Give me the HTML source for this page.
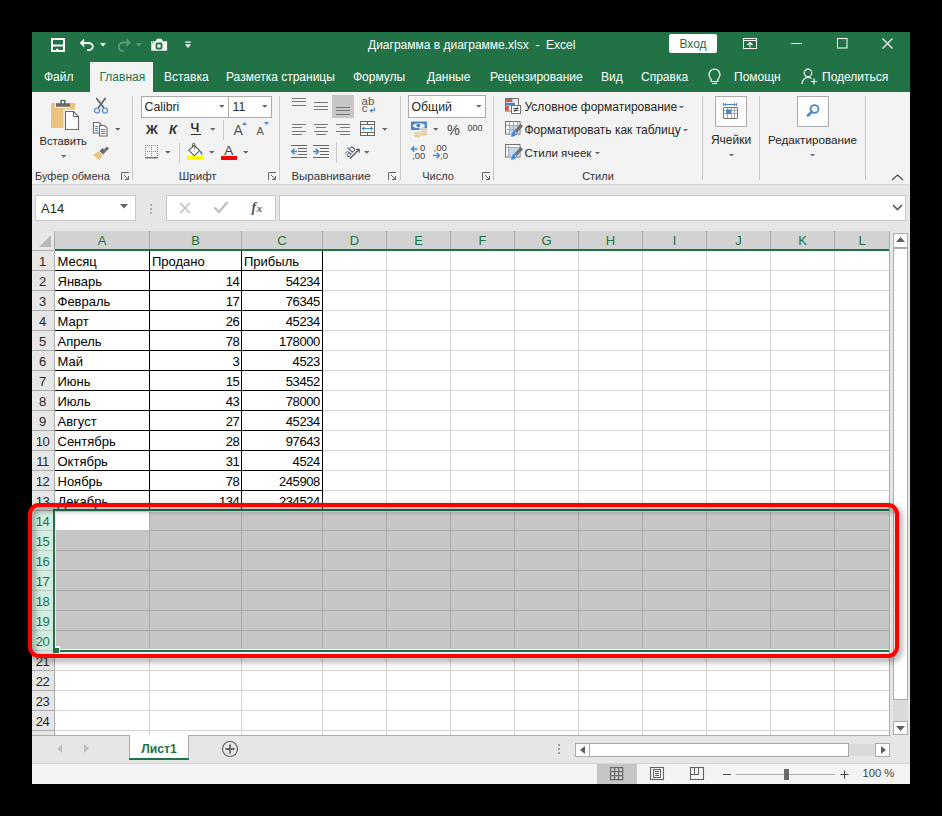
<!DOCTYPE html>
<html><head><meta charset="utf-8"><style>
html,body{margin:0;padding:0;background:#000;width:942px;height:816px;overflow:hidden;position:relative}
.t{position:absolute;font-family:"Liberation Sans",sans-serif;white-space:pre}
.r{position:absolute;display:block}
</style></head><body>
<div class="r" style="left:32px;top:32px;width:878px;height:752px;background:#F3F3F3;"></div>
<div class="r" style="left:32px;top:32px;width:878px;height:60px;background:#217346;"></div>
<div class="r" style="left:90px;top:62px;width:63px;height:30px;background:#F3F3F3;"></div>
<svg class="r" style="left:50px;top:37px;" width="16" height="16" viewBox="0 0 16 16"><rect x="2" y="2" width="12" height="12" fill="none" stroke="#fff" stroke-width="2"/><rect x="2" y="7.5" width="12" height="2" fill="#fff"/><rect x="6" y="11.8" width="2.4" height="2.4" fill="#fff"/></svg>
<svg class="r" style="left:79px;top:37px;" width="18" height="16" viewBox="0 0 18 16"><path d="M0.8 6 5.2 1.6v8.8z" fill="#fff"/><path d="M4 6h5.2a4.6 3.6 0 0 1 0 7.2H8" fill="none" stroke="#fff" stroke-width="1.8"/></svg>
<svg class="r" style="left:99.5px;top:42.5px;" width="7" height="4" viewBox="0 0 7 4"><path d="M0 0h6l-3 3.5z" fill="#fff"/></svg>
<svg class="r" style="left:115px;top:37px;" width="18" height="16" viewBox="0 0 18 16"><path d="M16 5.5 11.5 1.2v8.6z" fill="#5E9A77"/><path d="M13 5.5H8a4.3 4.3 0 0 0 0 8.6h1" fill="none" stroke="#5E9A77" stroke-width="1.8"/></svg>
<svg class="r" style="left:135.5px;top:42.5px;" width="7" height="4" viewBox="0 0 7 4"><path d="M0 0h6l-3 3.5z" fill="#5E9A77"/></svg>
<svg class="r" style="left:150px;top:38px;" width="18" height="14" viewBox="0 0 18 14"><path d="M1.2 3.2h4.3l1.6-2.4h4.4l1.6 2.4h4v9.6H1.2z" fill="#F2F2F2"/><rect x="5.6" y="4.6" width="6.8" height="6.8" rx="1.6" fill="#217346"/><rect x="7.4" y="6.4" width="3.2" height="3.2" fill="#F2F2F2"/><circle cx="2.6" cy="4.6" r="0.6" fill="#217346"/></svg>
<svg class="r" style="left:184px;top:40px;" width="8" height="10" viewBox="0 0 8 10"><rect x="1.2" y="1.5" width="5.6" height="1.2" fill="#fff"/><path d="M1 4.2h6l-3 3.8z" fill="#fff"/></svg>
<div class="t" style="left:368px;top:39.30px;font-size:12px;line-height:12px;color:#FFFFFF;font-weight:normal;">Диаграмма в диаграмме.xlsx  -  Excel</div>
<div class="r" style="left:669px;top:34px;width:48px;height:19px;background:#FFFFFF;border-radius:2px;"></div>
<div class="t" style="left:493px;width:400px;text-align:center;top:38.30px;font-size:12px;line-height:12px;color:#217346;font-weight:normal;">Вход</div>
<svg class="r" style="left:742px;top:37px;" width="16" height="13" viewBox="0 0 16 13"><rect x="1.5" y="1.5" width="13" height="10" fill="none" stroke="#fff" stroke-width="1"/><path d="M1.5 3.5h13" stroke="#fff" stroke-width="1"/><path d="M8 10.5v-5M5.5 8 8 5.5 10.5 8" fill="none" stroke="#fff" stroke-width="1.1"/></svg>
<div class="r" style="left:791px;top:43px;width:11px;height:1px;background:#FFFFFF;"></div>
<svg class="r" style="left:836px;top:37px;" width="12" height="12" viewBox="0 0 12 12"><rect x="1.5" y="1.5" width="9.5" height="9.5" fill="none" stroke="#fff" stroke-width="1"/></svg>
<svg class="r" style="left:881px;top:37px;" width="13" height="13" viewBox="0 0 13 13"><path d="M1.5 1.5l10 10M11.5 1.5 1.5 11.5" stroke="#fff" stroke-width="1.1"/></svg>
<div class="t" style="left:44px;top:70.80px;font-size:12px;line-height:12px;color:#FFFFFF;font-weight:normal;">Файл</div>
<div class="t" style="left:164px;top:70.80px;font-size:12px;line-height:12px;color:#FFFFFF;font-weight:normal;">Вставка</div>
<div class="t" style="left:226px;top:70.80px;font-size:12px;line-height:12px;color:#FFFFFF;font-weight:normal;">Разметка страницы</div>
<div class="t" style="left:353px;top:70.80px;font-size:12px;line-height:12px;color:#FFFFFF;font-weight:normal;">Формулы</div>
<div class="t" style="left:427px;top:70.80px;font-size:12px;line-height:12px;color:#FFFFFF;font-weight:normal;">Данные</div>
<div class="t" style="left:490px;top:70.80px;font-size:12px;line-height:12px;color:#FFFFFF;font-weight:normal;">Рецензирование</div>
<div class="t" style="left:601px;top:70.80px;font-size:12px;line-height:12px;color:#FFFFFF;font-weight:normal;">Вид</div>
<div class="t" style="left:641px;top:70.80px;font-size:12px;line-height:12px;color:#FFFFFF;font-weight:normal;">Справка</div>
<div class="t" style="left:734px;top:70.80px;font-size:12px;line-height:12px;color:#FFFFFF;font-weight:normal;">Помощн</div>
<div class="t" style="left:822px;top:70.80px;font-size:12px;line-height:12px;color:#FFFFFF;font-weight:normal;">Поделиться</div>
<div class="t" style="left:99.5px;top:70.80px;font-size:12px;line-height:12px;color:#217346;font-weight:normal;">Главная</div>
<svg class="r" style="left:707px;top:68px;" width="15" height="17" viewBox="0 0 15 17"><path d="M4.2 11.5C3 10.2 2 8.8 2 6.6a5.5 5.5 0 0 1 11 0c0 2.2-1 3.6-2.2 4.9v2H4.2z" fill="none" stroke="#fff" stroke-width="1.2"/><path d="M5 15.5h5" stroke="#fff" stroke-width="1.2"/></svg>
<svg class="r" style="left:801px;top:68px;" width="17" height="17" viewBox="0 0 17 17"><circle cx="7" cy="5" r="3.8" fill="none" stroke="#fff" stroke-width="1.2"/><path d="M1 16c0-3.8 2.6-6.5 6-6.5 1.5 0 2.6.4 3.5 1" fill="none" stroke="#fff" stroke-width="1.2"/><path d="M13 10.5v6M10 13.5h6" stroke="#fff" stroke-width="1.2"/></svg>
<div class="r" style="left:32px;top:184px;width:878px;height:1px;background:#D5D5D5;"></div>
<div class="r" style="left:132px;top:96px;width:1px;height:84px;background:#C8C8C8;"></div>
<div class="r" style="left:279px;top:96px;width:1px;height:84px;background:#C8C8C8;"></div>
<div class="r" style="left:400px;top:96px;width:1px;height:84px;background:#C8C8C8;"></div>
<div class="r" style="left:493px;top:96px;width:1px;height:84px;background:#C8C8C8;"></div>
<div class="r" style="left:702px;top:96px;width:1px;height:84px;background:#C8C8C8;"></div>
<div class="r" style="left:759px;top:96px;width:1px;height:84px;background:#C8C8C8;"></div>
<div class="r" style="left:865px;top:96px;width:1px;height:84px;background:#C8C8C8;"></div>
<div class="t" style="left:35px;top:171.15px;font-size:11px;line-height:11px;color:#333333;font-weight:normal;">Буфер обмена</div>
<div class="t" style="left:-2.3000000000000114px;width:400px;text-align:center;top:170.72px;font-size:11.5px;line-height:11.5px;color:#333333;font-weight:normal;">Шрифт</div>
<div class="t" style="left:131px;width:400px;text-align:center;top:170.72px;font-size:11.5px;line-height:11.5px;color:#333333;font-weight:normal;">Выравнивание</div>
<div class="t" style="left:238px;width:400px;text-align:center;top:171.15px;font-size:11px;line-height:11px;color:#333333;font-weight:normal;">Число</div>
<div class="t" style="left:398px;width:400px;text-align:center;top:171.15px;font-size:11px;line-height:11px;color:#333333;font-weight:normal;">Стили</div>
<svg class="r" style="left:121px;top:172px;" width="9" height="9" viewBox="0 0 9 9"><path d="M0.5 8V0.5H8" fill="none" stroke="#666" stroke-width="1"/><path d="M3 3l4.5 4.5M7.5 4v3.5H4" fill="none" stroke="#666" stroke-width="1"/></svg>
<svg class="r" style="left:268px;top:172px;" width="9" height="9" viewBox="0 0 9 9"><path d="M0.5 8V0.5H8" fill="none" stroke="#666" stroke-width="1"/><path d="M3 3l4.5 4.5M7.5 4v3.5H4" fill="none" stroke="#666" stroke-width="1"/></svg>
<svg class="r" style="left:388px;top:172px;" width="9" height="9" viewBox="0 0 9 9"><path d="M0.5 8V0.5H8" fill="none" stroke="#666" stroke-width="1"/><path d="M3 3l4.5 4.5M7.5 4v3.5H4" fill="none" stroke="#666" stroke-width="1"/></svg>
<svg class="r" style="left:482px;top:172px;" width="9" height="9" viewBox="0 0 9 9"><path d="M0.5 8V0.5H8" fill="none" stroke="#666" stroke-width="1"/><path d="M3 3l4.5 4.5M7.5 4v3.5H4" fill="none" stroke="#666" stroke-width="1"/></svg>
<svg class="r" style="left:891px;top:174px;" width="13" height="7" viewBox="0 0 13 7"><path d="M1 6 6.5 1 12 6" fill="none" stroke="#444" stroke-width="1.1"/></svg>
<div class="r" style="left:32px;top:185px;width:878px;height:46px;background:#E6E6E6;"></div>
<div class="r" style="left:35px;top:195px;width:101px;height:26px;background:#FFFFFF;box-sizing:border-box;border:1px solid #C6C6C6;"></div>
<div class="t" style="left:41px;top:201.75px;font-size:13px;line-height:13px;color:#262626;font-weight:normal;">A14</div>
<svg class="r" style="left:120px;top:204px;" width="9" height="5" viewBox="0 0 9 5"><path d="M0 0h8l-4 4.5z" fill="#666"/></svg>
<div class="r" style="left:150px;top:204px;width:2px;height:2px;background:#B0B0B0;"></div>
<div class="r" style="left:150px;top:208px;width:2px;height:2px;background:#B0B0B0;"></div>
<div class="r" style="left:150px;top:212px;width:2px;height:2px;background:#B0B0B0;"></div>
<div class="r" style="left:166px;top:195px;width:110px;height:26px;background:#FFFFFF;box-sizing:border-box;border:1px solid #C6C6C6;"></div>
<svg class="r" style="left:178px;top:201px;" width="14" height="14" viewBox="0 0 14 14"><path d="M2 2l10 10M12 2 2 12" stroke="#C0C0C0" stroke-width="1.6"/></svg>
<svg class="r" style="left:213px;top:200px;" width="16" height="14" viewBox="0 0 16 14"><path d="M1.5 7.5 6 12 14.5 2" fill="none" stroke="#C0C0C0" stroke-width="2.3"/></svg>
<div class="t" style="left:251.5px;top:200.60px;font-size:14px;line-height:14px;color:#555;font-weight:normal;font-family:'Liberation Serif';font-style:italic;font-weight:bold;">f</div>
<div class="t" style="left:256.8px;top:203.57px;font-size:10.5px;line-height:10.5px;color:#555;font-weight:normal;font-family:'Liberation Serif';font-style:italic;font-weight:bold;">x</div>
<div class="r" style="left:279px;top:195px;width:627px;height:26px;background:#FFFFFF;box-sizing:border-box;border:1px solid #C6C6C6;"></div>
<svg class="r" style="left:892px;top:204px;" width="11" height="7" viewBox="0 0 11 7"><path d="M1 1 5.5 5.5 10 1" fill="none" stroke="#555" stroke-width="1.6"/></svg>
<div class="r" style="left:32px;top:231px;width:857px;height:19px;background:#E6E6E6;"></div>
<div class="r" style="left:55px;top:231px;width:834px;height:18px;background:#D2D2D2;"></div>
<div class="r" style="left:55px;top:249px;width:834px;height:2px;background:#217346;"></div>
<svg class="r" style="left:39px;top:235px;" width="12" height="12" viewBox="0 0 12 12"><path d="M12 0v12H0z" fill="#B9B9B9"/></svg>
<div class="r" style="left:32px;top:250px;width:22px;height:1px;background:#ABABAB;"></div>
<div class="r" style="left:149px;top:231px;width:1px;height:18px;background:#ABABAB;"></div>
<div class="r" style="left:241px;top:231px;width:1px;height:18px;background:#ABABAB;"></div>
<div class="r" style="left:322px;top:231px;width:1px;height:18px;background:#ABABAB;"></div>
<div class="r" style="left:386px;top:231px;width:1px;height:18px;background:#ABABAB;"></div>
<div class="r" style="left:450px;top:231px;width:1px;height:18px;background:#ABABAB;"></div>
<div class="r" style="left:514px;top:231px;width:1px;height:18px;background:#ABABAB;"></div>
<div class="r" style="left:578px;top:231px;width:1px;height:18px;background:#ABABAB;"></div>
<div class="r" style="left:642px;top:231px;width:1px;height:18px;background:#ABABAB;"></div>
<div class="r" style="left:706px;top:231px;width:1px;height:18px;background:#ABABAB;"></div>
<div class="r" style="left:770px;top:231px;width:1px;height:18px;background:#ABABAB;"></div>
<div class="r" style="left:834px;top:231px;width:1px;height:18px;background:#ABABAB;"></div>
<div class="r" style="left:54px;top:231px;width:1px;height:19px;background:#ABABAB;"></div>
<div class="t" style="left:-98.0px;width:400px;text-align:center;top:233.95px;font-size:13px;line-height:13px;color:#217346;font-weight:normal;">A</div>
<div class="t" style="left:-4.5px;width:400px;text-align:center;top:233.95px;font-size:13px;line-height:13px;color:#217346;font-weight:normal;">B</div>
<div class="t" style="left:82.0px;width:400px;text-align:center;top:233.95px;font-size:13px;line-height:13px;color:#217346;font-weight:normal;">C</div>
<div class="t" style="left:154.5px;width:400px;text-align:center;top:233.95px;font-size:13px;line-height:13px;color:#217346;font-weight:normal;">D</div>
<div class="t" style="left:218.5px;width:400px;text-align:center;top:233.95px;font-size:13px;line-height:13px;color:#217346;font-weight:normal;">E</div>
<div class="t" style="left:282.5px;width:400px;text-align:center;top:233.95px;font-size:13px;line-height:13px;color:#217346;font-weight:normal;">F</div>
<div class="t" style="left:346.5px;width:400px;text-align:center;top:233.95px;font-size:13px;line-height:13px;color:#217346;font-weight:normal;">G</div>
<div class="t" style="left:410.5px;width:400px;text-align:center;top:233.95px;font-size:13px;line-height:13px;color:#217346;font-weight:normal;">H</div>
<div class="t" style="left:474.5px;width:400px;text-align:center;top:233.95px;font-size:13px;line-height:13px;color:#217346;font-weight:normal;">I</div>
<div class="t" style="left:538.5px;width:400px;text-align:center;top:233.95px;font-size:13px;line-height:13px;color:#217346;font-weight:normal;">J</div>
<div class="t" style="left:602.5px;width:400px;text-align:center;top:233.95px;font-size:13px;line-height:13px;color:#217346;font-weight:normal;">K</div>
<div class="t" style="left:662.0px;width:400px;text-align:center;top:233.95px;font-size:13px;line-height:13px;color:#217346;font-weight:normal;">L</div>
<div class="r" style="left:55px;top:251px;width:834px;height:484px;background:#FFFFFF;"></div>
<div class="r" style="left:32px;top:251px;width:22px;height:484px;background:#E6E6E6;"></div>
<div class="r" style="left:54px;top:251px;width:1px;height:484px;background:#ABABAB;"></div>
<div class="r" style="left:55px;top:270px;width:834px;height:1px;background:#D4D4D4;"></div>
<div class="r" style="left:32px;top:270px;width:22px;height:1px;background:#ABABAB;"></div>
<div class="r" style="left:55px;top:290px;width:834px;height:1px;background:#D4D4D4;"></div>
<div class="r" style="left:32px;top:290px;width:22px;height:1px;background:#ABABAB;"></div>
<div class="r" style="left:55px;top:310px;width:834px;height:1px;background:#D4D4D4;"></div>
<div class="r" style="left:32px;top:310px;width:22px;height:1px;background:#ABABAB;"></div>
<div class="r" style="left:55px;top:330px;width:834px;height:1px;background:#D4D4D4;"></div>
<div class="r" style="left:32px;top:330px;width:22px;height:1px;background:#ABABAB;"></div>
<div class="r" style="left:55px;top:350px;width:834px;height:1px;background:#D4D4D4;"></div>
<div class="r" style="left:32px;top:350px;width:22px;height:1px;background:#ABABAB;"></div>
<div class="r" style="left:55px;top:370px;width:834px;height:1px;background:#D4D4D4;"></div>
<div class="r" style="left:32px;top:370px;width:22px;height:1px;background:#ABABAB;"></div>
<div class="r" style="left:55px;top:390px;width:834px;height:1px;background:#D4D4D4;"></div>
<div class="r" style="left:32px;top:390px;width:22px;height:1px;background:#ABABAB;"></div>
<div class="r" style="left:55px;top:410px;width:834px;height:1px;background:#D4D4D4;"></div>
<div class="r" style="left:32px;top:410px;width:22px;height:1px;background:#ABABAB;"></div>
<div class="r" style="left:55px;top:430px;width:834px;height:1px;background:#D4D4D4;"></div>
<div class="r" style="left:32px;top:430px;width:22px;height:1px;background:#ABABAB;"></div>
<div class="r" style="left:55px;top:450px;width:834px;height:1px;background:#D4D4D4;"></div>
<div class="r" style="left:32px;top:450px;width:22px;height:1px;background:#ABABAB;"></div>
<div class="r" style="left:55px;top:470px;width:834px;height:1px;background:#D4D4D4;"></div>
<div class="r" style="left:32px;top:470px;width:22px;height:1px;background:#ABABAB;"></div>
<div class="r" style="left:55px;top:490px;width:834px;height:1px;background:#D4D4D4;"></div>
<div class="r" style="left:32px;top:490px;width:22px;height:1px;background:#ABABAB;"></div>
<div class="r" style="left:55px;top:510px;width:834px;height:1px;background:#D4D4D4;"></div>
<div class="r" style="left:32px;top:510px;width:22px;height:1px;background:#ABABAB;"></div>
<div class="r" style="left:55px;top:530px;width:834px;height:1px;background:#D4D4D4;"></div>
<div class="r" style="left:32px;top:530px;width:22px;height:1px;background:#ABABAB;"></div>
<div class="r" style="left:55px;top:550px;width:834px;height:1px;background:#D4D4D4;"></div>
<div class="r" style="left:32px;top:550px;width:22px;height:1px;background:#ABABAB;"></div>
<div class="r" style="left:55px;top:570px;width:834px;height:1px;background:#D4D4D4;"></div>
<div class="r" style="left:32px;top:570px;width:22px;height:1px;background:#ABABAB;"></div>
<div class="r" style="left:55px;top:590px;width:834px;height:1px;background:#D4D4D4;"></div>
<div class="r" style="left:32px;top:590px;width:22px;height:1px;background:#ABABAB;"></div>
<div class="r" style="left:55px;top:610px;width:834px;height:1px;background:#D4D4D4;"></div>
<div class="r" style="left:32px;top:610px;width:22px;height:1px;background:#ABABAB;"></div>
<div class="r" style="left:55px;top:630px;width:834px;height:1px;background:#D4D4D4;"></div>
<div class="r" style="left:32px;top:630px;width:22px;height:1px;background:#ABABAB;"></div>
<div class="r" style="left:55px;top:650px;width:834px;height:1px;background:#D4D4D4;"></div>
<div class="r" style="left:32px;top:650px;width:22px;height:1px;background:#ABABAB;"></div>
<div class="r" style="left:55px;top:670px;width:834px;height:1px;background:#D4D4D4;"></div>
<div class="r" style="left:32px;top:670px;width:22px;height:1px;background:#ABABAB;"></div>
<div class="r" style="left:55px;top:690px;width:834px;height:1px;background:#D4D4D4;"></div>
<div class="r" style="left:32px;top:690px;width:22px;height:1px;background:#ABABAB;"></div>
<div class="r" style="left:55px;top:710px;width:834px;height:1px;background:#D4D4D4;"></div>
<div class="r" style="left:32px;top:710px;width:22px;height:1px;background:#ABABAB;"></div>
<div class="r" style="left:55px;top:730px;width:834px;height:1px;background:#D4D4D4;"></div>
<div class="r" style="left:32px;top:730px;width:22px;height:1px;background:#ABABAB;"></div>
<div class="r" style="left:149px;top:251px;width:1px;height:484px;background:#D4D4D4;"></div>
<div class="r" style="left:241px;top:251px;width:1px;height:484px;background:#D4D4D4;"></div>
<div class="r" style="left:322px;top:251px;width:1px;height:484px;background:#D4D4D4;"></div>
<div class="r" style="left:386px;top:251px;width:1px;height:484px;background:#D4D4D4;"></div>
<div class="r" style="left:450px;top:251px;width:1px;height:484px;background:#D4D4D4;"></div>
<div class="r" style="left:514px;top:251px;width:1px;height:484px;background:#D4D4D4;"></div>
<div class="r" style="left:578px;top:251px;width:1px;height:484px;background:#D4D4D4;"></div>
<div class="r" style="left:642px;top:251px;width:1px;height:484px;background:#D4D4D4;"></div>
<div class="r" style="left:706px;top:251px;width:1px;height:484px;background:#D4D4D4;"></div>
<div class="r" style="left:770px;top:251px;width:1px;height:484px;background:#D4D4D4;"></div>
<div class="r" style="left:834px;top:251px;width:1px;height:484px;background:#D4D4D4;"></div>
<div class="r" style="left:889px;top:231px;width:1px;height:505px;background:#ABABAB;"></div>
<div class="r" style="left:55px;top:511px;width:834px;height:139px;background:#C6C6C6;"></div>
<div class="r" style="left:55px;top:511px;width:94px;height:19px;background:#FFFFFF;"></div>
<div class="r" style="left:149px;top:530px;width:740px;height:1px;background:#ABABAB;"></div>
<div class="r" style="left:55px;top:550px;width:834px;height:1px;background:#ABABAB;"></div>
<div class="r" style="left:55px;top:570px;width:834px;height:1px;background:#ABABAB;"></div>
<div class="r" style="left:55px;top:590px;width:834px;height:1px;background:#ABABAB;"></div>
<div class="r" style="left:55px;top:610px;width:834px;height:1px;background:#ABABAB;"></div>
<div class="r" style="left:55px;top:630px;width:834px;height:1px;background:#ABABAB;"></div>
<div class="r" style="left:55px;top:650px;width:834px;height:1px;background:#ABABAB;"></div>
<div class="r" style="left:149px;top:511px;width:1px;height:139px;background:#ABABAB;"></div>
<div class="r" style="left:241px;top:511px;width:1px;height:139px;background:#ABABAB;"></div>
<div class="r" style="left:322px;top:511px;width:1px;height:139px;background:#ABABAB;"></div>
<div class="r" style="left:386px;top:511px;width:1px;height:139px;background:#ABABAB;"></div>
<div class="r" style="left:450px;top:511px;width:1px;height:139px;background:#ABABAB;"></div>
<div class="r" style="left:514px;top:511px;width:1px;height:139px;background:#ABABAB;"></div>
<div class="r" style="left:578px;top:511px;width:1px;height:139px;background:#ABABAB;"></div>
<div class="r" style="left:642px;top:511px;width:1px;height:139px;background:#ABABAB;"></div>
<div class="r" style="left:706px;top:511px;width:1px;height:139px;background:#ABABAB;"></div>
<div class="r" style="left:770px;top:511px;width:1px;height:139px;background:#ABABAB;"></div>
<div class="r" style="left:834px;top:511px;width:1px;height:139px;background:#ABABAB;"></div>
<div class="r" style="left:32px;top:511px;width:21px;height:139px;background:#D3EDE0;"></div>
<div class="r" style="left:32px;top:530px;width:21px;height:1px;background:#B6CFC2;"></div>
<div class="r" style="left:32px;top:550px;width:21px;height:1px;background:#B6CFC2;"></div>
<div class="r" style="left:32px;top:570px;width:21px;height:1px;background:#B6CFC2;"></div>
<div class="r" style="left:32px;top:590px;width:21px;height:1px;background:#B6CFC2;"></div>
<div class="r" style="left:32px;top:610px;width:21px;height:1px;background:#B6CFC2;"></div>
<div class="r" style="left:32px;top:630px;width:21px;height:1px;background:#B6CFC2;"></div>
<div class="r" style="left:32px;top:650px;width:21px;height:1px;background:#B6CFC2;"></div>
<div class="r" style="left:55px;top:270px;width:268px;height:1px;background:#000;"></div>
<div class="r" style="left:55px;top:290px;width:268px;height:1px;background:#000;"></div>
<div class="r" style="left:55px;top:310px;width:268px;height:1px;background:#000;"></div>
<div class="r" style="left:55px;top:330px;width:268px;height:1px;background:#000;"></div>
<div class="r" style="left:55px;top:350px;width:268px;height:1px;background:#000;"></div>
<div class="r" style="left:55px;top:370px;width:268px;height:1px;background:#000;"></div>
<div class="r" style="left:55px;top:390px;width:268px;height:1px;background:#000;"></div>
<div class="r" style="left:55px;top:410px;width:268px;height:1px;background:#000;"></div>
<div class="r" style="left:55px;top:430px;width:268px;height:1px;background:#000;"></div>
<div class="r" style="left:55px;top:450px;width:268px;height:1px;background:#000;"></div>
<div class="r" style="left:55px;top:470px;width:268px;height:1px;background:#000;"></div>
<div class="r" style="left:55px;top:490px;width:268px;height:1px;background:#000;"></div>
<div class="r" style="left:55px;top:510px;width:268px;height:1px;background:#000;"></div>
<div class="r" style="left:149px;top:251px;width:1px;height:259px;background:#000;"></div>
<div class="r" style="left:241px;top:251px;width:1px;height:259px;background:#000;"></div>
<div class="r" style="left:322px;top:251px;width:1px;height:259px;background:#000;"></div>
<div class="t" style="left:-157.5px;width:400px;text-align:center;top:254.95px;font-size:13px;line-height:13px;color:#262626;font-weight:normal;letter-spacing:-0.4px;">1</div>
<div class="t" style="left:-157.5px;width:400px;text-align:center;top:274.95px;font-size:13px;line-height:13px;color:#262626;font-weight:normal;letter-spacing:-0.4px;">2</div>
<div class="t" style="left:-157.5px;width:400px;text-align:center;top:294.95px;font-size:13px;line-height:13px;color:#262626;font-weight:normal;letter-spacing:-0.4px;">3</div>
<div class="t" style="left:-157.5px;width:400px;text-align:center;top:314.95px;font-size:13px;line-height:13px;color:#262626;font-weight:normal;letter-spacing:-0.4px;">4</div>
<div class="t" style="left:-157.5px;width:400px;text-align:center;top:334.95px;font-size:13px;line-height:13px;color:#262626;font-weight:normal;letter-spacing:-0.4px;">5</div>
<div class="t" style="left:-157.5px;width:400px;text-align:center;top:354.95px;font-size:13px;line-height:13px;color:#262626;font-weight:normal;letter-spacing:-0.4px;">6</div>
<div class="t" style="left:-157.5px;width:400px;text-align:center;top:374.95px;font-size:13px;line-height:13px;color:#262626;font-weight:normal;letter-spacing:-0.4px;">7</div>
<div class="t" style="left:-157.5px;width:400px;text-align:center;top:394.95px;font-size:13px;line-height:13px;color:#262626;font-weight:normal;letter-spacing:-0.4px;">8</div>
<div class="t" style="left:-157.5px;width:400px;text-align:center;top:414.95px;font-size:13px;line-height:13px;color:#262626;font-weight:normal;letter-spacing:-0.4px;">9</div>
<div class="t" style="left:-157.5px;width:400px;text-align:center;top:434.95px;font-size:13px;line-height:13px;color:#262626;font-weight:normal;letter-spacing:-0.4px;">10</div>
<div class="t" style="left:-157.5px;width:400px;text-align:center;top:454.95px;font-size:13px;line-height:13px;color:#262626;font-weight:normal;letter-spacing:-0.4px;">11</div>
<div class="t" style="left:-157.5px;width:400px;text-align:center;top:474.95px;font-size:13px;line-height:13px;color:#262626;font-weight:normal;letter-spacing:-0.4px;">12</div>
<div class="t" style="left:-157.5px;width:400px;text-align:center;top:494.95px;font-size:13px;line-height:13px;color:#262626;font-weight:normal;letter-spacing:-0.4px;">13</div>
<div class="t" style="left:-157.5px;width:400px;text-align:center;top:514.95px;font-size:13px;line-height:13px;color:#217346;font-weight:normal;letter-spacing:-0.4px;">14</div>
<div class="t" style="left:-157.5px;width:400px;text-align:center;top:534.95px;font-size:13px;line-height:13px;color:#217346;font-weight:normal;letter-spacing:-0.4px;">15</div>
<div class="t" style="left:-157.5px;width:400px;text-align:center;top:554.95px;font-size:13px;line-height:13px;color:#217346;font-weight:normal;letter-spacing:-0.4px;">16</div>
<div class="t" style="left:-157.5px;width:400px;text-align:center;top:574.95px;font-size:13px;line-height:13px;color:#217346;font-weight:normal;letter-spacing:-0.4px;">17</div>
<div class="t" style="left:-157.5px;width:400px;text-align:center;top:594.95px;font-size:13px;line-height:13px;color:#217346;font-weight:normal;letter-spacing:-0.4px;">18</div>
<div class="t" style="left:-157.5px;width:400px;text-align:center;top:614.95px;font-size:13px;line-height:13px;color:#217346;font-weight:normal;letter-spacing:-0.4px;">19</div>
<div class="t" style="left:-157.5px;width:400px;text-align:center;top:634.95px;font-size:13px;line-height:13px;color:#217346;font-weight:normal;letter-spacing:-0.4px;">20</div>
<div class="t" style="left:-157.5px;width:400px;text-align:center;top:654.95px;font-size:13px;line-height:13px;color:#262626;font-weight:normal;letter-spacing:-0.4px;">21</div>
<div class="t" style="left:-157.5px;width:400px;text-align:center;top:674.95px;font-size:13px;line-height:13px;color:#262626;font-weight:normal;letter-spacing:-0.4px;">22</div>
<div class="t" style="left:-157.5px;width:400px;text-align:center;top:694.95px;font-size:13px;line-height:13px;color:#262626;font-weight:normal;letter-spacing:-0.4px;">23</div>
<div class="t" style="left:-157.5px;width:400px;text-align:center;top:714.95px;font-size:13px;line-height:13px;color:#262626;font-weight:normal;letter-spacing:-0.4px;">24</div>
<div class="t" style="left:57.5px;top:254.95px;font-size:13px;line-height:13px;color:#000;font-weight:normal;">Месяц</div>
<div class="t" style="left:152px;top:254.95px;font-size:13px;line-height:13px;color:#000;font-weight:normal;">Продано</div>
<div class="t" style="left:244px;top:254.95px;font-size:13px;line-height:13px;color:#000;font-weight:normal;">Прибыль</div>
<div class="t" style="left:57.5px;top:274.95px;font-size:13px;line-height:13px;color:#000;font-weight:normal;">Январь</div>
<div class="t" style="right:702.6px;top:274.95px;font-size:13px;line-height:13px;color:#000;font-weight:normal;letter-spacing:-0.4px;">14</div>
<div class="t" style="right:622.1px;top:274.95px;font-size:13px;line-height:13px;color:#000;font-weight:normal;letter-spacing:-0.4px;">54234</div>
<div class="t" style="left:57.5px;top:294.95px;font-size:13px;line-height:13px;color:#000;font-weight:normal;">Февраль</div>
<div class="t" style="right:702.6px;top:294.95px;font-size:13px;line-height:13px;color:#000;font-weight:normal;letter-spacing:-0.4px;">17</div>
<div class="t" style="right:622.1px;top:294.95px;font-size:13px;line-height:13px;color:#000;font-weight:normal;letter-spacing:-0.4px;">76345</div>
<div class="t" style="left:57.5px;top:314.95px;font-size:13px;line-height:13px;color:#000;font-weight:normal;">Март</div>
<div class="t" style="right:702.6px;top:314.95px;font-size:13px;line-height:13px;color:#000;font-weight:normal;letter-spacing:-0.4px;">26</div>
<div class="t" style="right:622.1px;top:314.95px;font-size:13px;line-height:13px;color:#000;font-weight:normal;letter-spacing:-0.4px;">45234</div>
<div class="t" style="left:57.5px;top:334.95px;font-size:13px;line-height:13px;color:#000;font-weight:normal;">Апрель</div>
<div class="t" style="right:702.6px;top:334.95px;font-size:13px;line-height:13px;color:#000;font-weight:normal;letter-spacing:-0.4px;">78</div>
<div class="t" style="right:622.1px;top:334.95px;font-size:13px;line-height:13px;color:#000;font-weight:normal;letter-spacing:-0.4px;">178000</div>
<div class="t" style="left:57.5px;top:354.95px;font-size:13px;line-height:13px;color:#000;font-weight:normal;">Май</div>
<div class="t" style="right:702.6px;top:354.95px;font-size:13px;line-height:13px;color:#000;font-weight:normal;letter-spacing:-0.4px;">3</div>
<div class="t" style="right:622.1px;top:354.95px;font-size:13px;line-height:13px;color:#000;font-weight:normal;letter-spacing:-0.4px;">4523</div>
<div class="t" style="left:57.5px;top:374.95px;font-size:13px;line-height:13px;color:#000;font-weight:normal;">Июнь</div>
<div class="t" style="right:702.6px;top:374.95px;font-size:13px;line-height:13px;color:#000;font-weight:normal;letter-spacing:-0.4px;">15</div>
<div class="t" style="right:622.1px;top:374.95px;font-size:13px;line-height:13px;color:#000;font-weight:normal;letter-spacing:-0.4px;">53452</div>
<div class="t" style="left:57.5px;top:394.95px;font-size:13px;line-height:13px;color:#000;font-weight:normal;">Июль</div>
<div class="t" style="right:702.6px;top:394.95px;font-size:13px;line-height:13px;color:#000;font-weight:normal;letter-spacing:-0.4px;">43</div>
<div class="t" style="right:622.1px;top:394.95px;font-size:13px;line-height:13px;color:#000;font-weight:normal;letter-spacing:-0.4px;">78000</div>
<div class="t" style="left:57.5px;top:414.95px;font-size:13px;line-height:13px;color:#000;font-weight:normal;">Август</div>
<div class="t" style="right:702.6px;top:414.95px;font-size:13px;line-height:13px;color:#000;font-weight:normal;letter-spacing:-0.4px;">27</div>
<div class="t" style="right:622.1px;top:414.95px;font-size:13px;line-height:13px;color:#000;font-weight:normal;letter-spacing:-0.4px;">45234</div>
<div class="t" style="left:57.5px;top:434.95px;font-size:13px;line-height:13px;color:#000;font-weight:normal;">Сентябрь</div>
<div class="t" style="right:702.6px;top:434.95px;font-size:13px;line-height:13px;color:#000;font-weight:normal;letter-spacing:-0.4px;">28</div>
<div class="t" style="right:622.1px;top:434.95px;font-size:13px;line-height:13px;color:#000;font-weight:normal;letter-spacing:-0.4px;">97643</div>
<div class="t" style="left:57.5px;top:454.95px;font-size:13px;line-height:13px;color:#000;font-weight:normal;">Октябрь</div>
<div class="t" style="right:702.6px;top:454.95px;font-size:13px;line-height:13px;color:#000;font-weight:normal;letter-spacing:-0.4px;">31</div>
<div class="t" style="right:622.1px;top:454.95px;font-size:13px;line-height:13px;color:#000;font-weight:normal;letter-spacing:-0.4px;">4524</div>
<div class="t" style="left:57.5px;top:474.95px;font-size:13px;line-height:13px;color:#000;font-weight:normal;">Ноябрь</div>
<div class="t" style="right:702.6px;top:474.95px;font-size:13px;line-height:13px;color:#000;font-weight:normal;letter-spacing:-0.4px;">78</div>
<div class="t" style="right:622.1px;top:474.95px;font-size:13px;line-height:13px;color:#000;font-weight:normal;letter-spacing:-0.4px;">245908</div>
<div class="t" style="left:57.5px;top:494.95px;font-size:13px;line-height:13px;color:#000;font-weight:normal;">Декабрь</div>
<div class="t" style="right:702.6px;top:494.95px;font-size:13px;line-height:13px;color:#000;font-weight:normal;letter-spacing:-0.4px;">134</div>
<div class="t" style="right:622.1px;top:494.95px;font-size:13px;line-height:13px;color:#000;font-weight:normal;letter-spacing:-0.4px;">234524</div>
<div class="r" style="left:55px;top:511px;width:834px;height:1px;background:#E4E4E4;"></div>
<div class="r" style="left:53px;top:509px;width:836px;height:2px;background:#217346;"></div>
<div class="r" style="left:55px;top:649px;width:834px;height:1px;background:#FFFFFF;"></div>
<div class="r" style="left:55px;top:652px;width:834px;height:1px;background:#FFFFFF;"></div>
<div class="r" style="left:53px;top:650px;width:836px;height:2px;background:#217346;"></div>
<div class="r" style="left:53px;top:509px;width:2px;height:143px;background:#217346;"></div>
<div class="r" style="left:55px;top:511px;width:1px;height:139px;background:#FFFFFF;"></div>
<div class="r" style="left:55px;top:646px;width:5px;height:7px;background:#FFFFFF;"></div>
<div class="r" style="left:53px;top:648px;width:6px;height:5px;background:#217346;"></div>
<div class="r" style="left:890px;top:231px;width:20px;height:504px;background:#E6E6E6;"></div>
<div class="r" style="left:893px;top:233px;width:15px;height:15px;background:#FFFFFF;box-sizing:border-box;border:1px solid #ABABAB;"></div>
<svg class="r" style="left:896px;top:237px;" width="9" height="5" viewBox="0 0 9 5"><path d="M0 5h9L4.5 0z" fill="#5F5F5F"/></svg>
<div class="r" style="left:893px;top:248px;width:15px;height:452px;background:#FFFFFF;box-sizing:border-box;border:1px solid #ABABAB;"></div>
<div class="r" style="left:893px;top:700px;width:15px;height:21px;background:#DADADA;"></div>
<div class="r" style="left:893px;top:721px;width:15px;height:14px;background:#FFFFFF;box-sizing:border-box;border:1px solid #ABABAB;"></div>
<svg class="r" style="left:896px;top:726px;" width="9" height="5" viewBox="0 0 9 5"><path d="M0 0h9L4.5 5z" fill="#5F5F5F"/></svg>
<div class="r" style="left:32px;top:735px;width:878px;height:28px;background:#E6E6E6;"></div>
<div class="r" style="left:32px;top:735px;width:858px;height:1px;background:#ABABAB;"></div>
<div class="r" style="left:32px;top:763px;width:878px;height:1px;background:#D5D5D5;"></div>
<svg class="r" style="left:57px;top:744px;" width="6" height="9" viewBox="0 0 6 9"><path d="M5 0v9L0 4.5z" fill="#C0C0C0"/></svg>
<svg class="r" style="left:84px;top:744px;" width="6" height="9" viewBox="0 0 6 9"><path d="M0 0v9l5-4.5z" fill="#C0C0C0"/></svg>
<div class="r" style="left:129px;top:735px;width:60px;height:25px;background:#FFFFFF;box-sizing:border-box;border-left:1px solid #ABABAB;border-right:1px solid #ABABAB;"></div>
<div class="r" style="left:129px;top:758px;width:60px;height:2px;background:#217346;"></div>
<div class="t" style="left:-41px;width:400px;text-align:center;top:742.83px;font-size:12.2px;line-height:12.2px;color:#217346;font-weight:bold;">Лист1</div>
<svg class="r" style="left:221px;top:740px;" width="18" height="18" viewBox="0 0 18 18"><circle cx="9" cy="9" r="7.5" fill="none" stroke="#666" stroke-width="1.2"/><path d="M9 4.5v9M4.5 9h9" stroke="#666" stroke-width="1.8"/></svg>
<div class="r" style="left:558px;top:744px;width:2px;height:2px;background:#A0A0A0;"></div>
<div class="r" style="left:558px;top:748px;width:2px;height:2px;background:#A0A0A0;"></div>
<div class="r" style="left:558px;top:752px;width:2px;height:2px;background:#A0A0A0;"></div>
<div class="r" style="left:575px;top:743px;width:15px;height:14px;background:#FFFFFF;box-sizing:border-box;border:1px solid #ABABAB;"></div>
<svg class="r" style="left:580px;top:746px;" width="5" height="8" viewBox="0 0 5 8"><path d="M5 0v8L0 4z" fill="#5F5F5F"/></svg>
<div class="r" style="left:589px;top:743px;width:260px;height:14px;background:#FFFFFF;box-sizing:border-box;border:1px solid #ABABAB;"></div>
<div class="r" style="left:849px;top:744px;width:27px;height:12px;background:#DADADA;"></div>
<div class="r" style="left:875px;top:743px;width:15px;height:14px;background:#FFFFFF;box-sizing:border-box;border:1px solid #ABABAB;"></div>
<svg class="r" style="left:881px;top:746px;" width="5" height="8" viewBox="0 0 5 8"><path d="M0 0v8l5-4z" fill="#5F5F5F"/></svg>
<div class="r" style="left:32px;top:764px;width:878px;height:20px;background:#F3F3F3;"></div>
<div class="r" style="left:597px;top:764px;width:40px;height:20px;background:#C6C6C6;"></div>
<svg class="r" style="left:609px;top:766px;" width="15" height="15" viewBox="0 0 15 15"><rect x="1.6" y="1.6" width="12" height="12" fill="#D4D4D4" stroke="#6A6A6A" stroke-width="1.3"/><path d="M1 5.6h13M1 9.6h13M5.6 1v13M9.6 1v13" stroke="#6A6A6A" stroke-width="1.3"/></svg>
<svg class="r" style="left:649px;top:766px;" width="16" height="15" viewBox="0 0 16 15"><rect x="1.5" y="1.5" width="13" height="12" fill="none" stroke="#666" stroke-width="1.1"/><rect x="4.5" y="3.5" width="7" height="8" fill="none" stroke="#666" stroke-width="1"/><rect x="6" y="5" width="4" height="1" fill="#666"/><rect x="6" y="7" width="4" height="1" fill="#666"/><rect x="6" y="9" width="4" height="1" fill="#666"/></svg>
<svg class="r" style="left:689px;top:766px;" width="16" height="15" viewBox="0 0 16 15"><rect x="1.5" y="1.5" width="13" height="12" fill="none" stroke="#666" stroke-width="1.1"/><path d="M5.5 1.5v7M9.5 1.5v7H1.5" fill="none" stroke="#666" stroke-width="1"/></svg>
<div class="r" style="left:723px;top:774px;width:8px;height:1.4px;background:#555;"></div>
<div class="r" style="left:736px;top:774px;width:99px;height:1px;background:#B0B0B0;"></div>
<div class="r" style="left:784px;top:769px;width:5px;height:11px;background:#6A6A6A;"></div>
<svg class="r" style="left:840px;top:770px;" width="9" height="9" viewBox="0 0 9 9"><path d="M4.5 0.5v8M0.5 4.5h8" stroke="#444" stroke-width="1.1"/></svg>
<div class="t" style="left:862.5px;top:768.48px;font-size:11.2px;line-height:11.2px;color:#444;font-weight:normal;">100 %</div>
<svg class="r" style="left:46px;top:96px;" width="38" height="38" viewBox="0 0 38 38"><path d="M6 7h3.2v5h14.6V7H29v23.8a1.2 1.2 0 0 1-1.2 1.2H6.2A1.2 1.2 0 0 1 5 30.8V8.2A1.2 1.2 0 0 1 6.2 7z" fill="#E9C27D"/>
<path d="M10 7.2h4.3V5a1.3 1.3 0 0 1 1.3-1.3h2.8A1.3 1.3 0 0 1 19.7 5v2.2H24v3.6H10z" fill="#6A6A6A"/><rect x="16" y="5.2" width="2" height="2" fill="#fff"/>
<path d="M18.5 14.5h9.5l5.5 5.5V34.5h-15z" fill="#fff" stroke="#F3F3F3" stroke-width="2.2"/>
<path d="M19.5 15.5h8l5 5V33.5h-13z" fill="#fff" stroke="#6A6A6A" stroke-width="1.1"/>
<path d="M27.5 15.5v5h5" fill="none" stroke="#6A6A6A" stroke-width="1.1"/></svg>
<div class="t" style="left:39.5px;top:135.98px;font-size:11.2px;line-height:11.2px;color:#262626;font-weight:normal;">Вставить</div>
<svg class="r" style="left:60.7px;top:155.1px;" width="5.6" height="2.8" viewBox="0 0 5.6 2.8"><path d="M0 0h5.6l-2.8 2.8z" fill="#666666"/></svg>
<svg class="r" style="left:93px;top:97px;" width="16" height="17" viewBox="0 0 16 17"><path d="M3.8 1.5 10.5 10.5M12.2 1.5 5.5 10.5" stroke="#6A6A6A" stroke-width="1.9" stroke-linecap="round"/>
<circle cx="4" cy="13.5" r="2.5" fill="none" stroke="#4A86C8" stroke-width="1.2"/><circle cx="12" cy="13.5" r="2.5" fill="none" stroke="#4A86C8" stroke-width="1.2"/></svg>
<svg class="r" style="left:92px;top:121px;" width="17" height="16" viewBox="0 0 17 16"><path d="M1.5 1.5h5.5l2 2v8.5h-7.5z" fill="#fff" stroke="#6A6A6A" stroke-width="1.1"/>
<path d="M3 5.5h3M3 7.5h3M3 9.5h3" stroke="#4A86C8" stroke-width="1"/>
<path d="M7.5 4.5h5l2.5 2.5v8h-7.5z" fill="#fff" stroke="#6A6A6A" stroke-width="1.1"/>
<path d="M9 8.5h4.5M9 10.5h4.5M9 12.5h4.5" stroke="#4A86C8" stroke-width="1"/></svg>
<svg class="r" style="left:114.7px;top:128.1px;" width="5.6" height="2.8" viewBox="0 0 5.6 2.8"><path d="M0 0h5.6l-2.8 2.8z" fill="#666666"/></svg>
<svg class="r" style="left:92px;top:144px;" width="18" height="17" viewBox="0 0 18 17"><path d="M1 11 6.5 7.5 10.5 11.5 7.5 16z" fill="#E9C27D"/>
<path d="M7.5 7l3-3 3.5 3.5-3 3z" fill="#6A6A6A"/><path d="M12 5.5 15 2.5l2 2-3 3z" fill="#6A6A6A"/></svg>
<div class="r" style="left:141px;top:96px;width:88px;height:22px;background:#FFFFFF;box-sizing:border-box;border:1px solid #ABABAB;"></div>
<div class="r" style="left:228px;top:96px;width:44px;height:22px;background:#FFFFFF;box-sizing:border-box;border:1px solid #ABABAB;"></div>
<div class="t" style="left:144.5px;top:100.55px;font-size:12.3px;line-height:12.3px;color:#262626;font-weight:normal;">Calibri</div>
<div class="t" style="left:232.5px;top:100.55px;font-size:12.3px;line-height:12.3px;color:#262626;font-weight:normal;">11</div>
<svg class="r" style="left:218.7px;top:105.1px;" width="5.6" height="2.8" viewBox="0 0 5.6 2.8"><path d="M0 0h5.6l-2.8 2.8z" fill="#666666"/></svg>
<svg class="r" style="left:261.7px;top:105.1px;" width="5.6" height="2.8" viewBox="0 0 5.6 2.8"><path d="M0 0h5.6l-2.8 2.8z" fill="#666666"/></svg>
<div class="t" style="left:146px;top:122.95px;font-size:13px;line-height:13px;color:#333;font-weight:bold;">Ж</div>
<div class="t" style="left:169px;top:122.95px;font-size:13px;line-height:13px;color:#333;font-weight:bold;font-style:italic;">К</div>
<div class="t" style="left:190.5px;top:122.38px;font-size:12.5px;line-height:12.5px;color:#333;font-weight:bold;">Ч</div>
<div class="r" style="left:191px;top:134px;width:10px;height:1px;background:#333;"></div>
<svg class="r" style="left:209.7px;top:128.1px;" width="5.6" height="2.8" viewBox="0 0 5.6 2.8"><path d="M0 0h5.6l-2.8 2.8z" fill="#666666"/></svg>
<div class="r" style="left:223px;top:120px;width:1px;height:20px;background:#C8C8C8;"></div>
<div class="t" style="left:233.5px;top:123.10px;font-size:14px;line-height:14px;color:#555;font-weight:normal;">A</div>
<svg class="r" style="left:242px;top:122px;" width="5" height="3" viewBox="0 0 5 3"><path d="M0 3h5L2.5 0z" fill="#4A86C8"/></svg>
<div class="t" style="left:256.5px;top:125.65px;font-size:11px;line-height:11px;color:#555;font-weight:normal;">A</div>
<svg class="r" style="left:264px;top:122px;" width="5" height="3" viewBox="0 0 5 3"><path d="M0 0h5L2.5 3z" fill="#4A86C8"/></svg>
<svg class="r" style="left:144px;top:144px;" width="15" height="15" viewBox="0 0 15 15"><rect x="1" y="1" width="1" height="1" fill="#888"/><rect x="1" y="1" width="1" height="1" fill="#888"/><rect x="1" y="7" width="1" height="1" fill="#888"/><rect x="7" y="1" width="1" height="1" fill="#888"/><rect x="1" y="13" width="1" height="1" fill="#888"/><rect x="13" y="1" width="1" height="1" fill="#888"/><rect x="3" y="1" width="1" height="1" fill="#888"/><rect x="1" y="3" width="1" height="1" fill="#888"/><rect x="3" y="7" width="1" height="1" fill="#888"/><rect x="7" y="3" width="1" height="1" fill="#888"/><rect x="3" y="13" width="1" height="1" fill="#888"/><rect x="13" y="3" width="1" height="1" fill="#888"/><rect x="5" y="1" width="1" height="1" fill="#888"/><rect x="1" y="5" width="1" height="1" fill="#888"/><rect x="5" y="7" width="1" height="1" fill="#888"/><rect x="7" y="5" width="1" height="1" fill="#888"/><rect x="5" y="13" width="1" height="1" fill="#888"/><rect x="13" y="5" width="1" height="1" fill="#888"/><rect x="7" y="1" width="1" height="1" fill="#888"/><rect x="1" y="7" width="1" height="1" fill="#888"/><rect x="7" y="7" width="1" height="1" fill="#888"/><rect x="7" y="7" width="1" height="1" fill="#888"/><rect x="7" y="13" width="1" height="1" fill="#888"/><rect x="13" y="7" width="1" height="1" fill="#888"/><rect x="9" y="1" width="1" height="1" fill="#888"/><rect x="1" y="9" width="1" height="1" fill="#888"/><rect x="9" y="7" width="1" height="1" fill="#888"/><rect x="7" y="9" width="1" height="1" fill="#888"/><rect x="9" y="13" width="1" height="1" fill="#888"/><rect x="13" y="9" width="1" height="1" fill="#888"/><rect x="11" y="1" width="1" height="1" fill="#888"/><rect x="1" y="11" width="1" height="1" fill="#888"/><rect x="11" y="7" width="1" height="1" fill="#888"/><rect x="7" y="11" width="1" height="1" fill="#888"/><rect x="11" y="13" width="1" height="1" fill="#888"/><rect x="13" y="11" width="1" height="1" fill="#888"/><rect x="13" y="1" width="1" height="1" fill="#888"/><rect x="1" y="13" width="1" height="1" fill="#888"/><rect x="13" y="7" width="1" height="1" fill="#888"/><rect x="7" y="13" width="1" height="1" fill="#888"/><rect x="13" y="13" width="1" height="1" fill="#888"/><rect x="13" y="13" width="1" height="1" fill="#888"/><rect x="1" y="13" width="13" height="1.5" fill="#777"/></svg>
<svg class="r" style="left:165.2px;top:151.1px;" width="5.6" height="2.8" viewBox="0 0 5.6 2.8"><path d="M0 0h5.6l-2.8 2.8z" fill="#666666"/></svg>
<div class="r" style="left:179px;top:143px;width:1px;height:20px;background:#C8C8C8;"></div>
<svg class="r" style="left:186px;top:142px;" width="19" height="19" viewBox="0 0 19 19"><path d="M2.8 8.3 8.2 3.2 13.6 8.6 8.4 13.8z" fill="#fff" stroke="#555" stroke-width="1.1"/>
<path d="M6.5 5.5V2.5a1.2 1.2 0 0 1 2.4 0V7" fill="none" stroke="#555" stroke-width="1"/><path d="M13.8 8.5c1.8.6 3 2 2.6 4.6-1.4-.7-2.6-2.2-2.6-4.6z" fill="#4A86C8"/>
<rect x="1" y="14" width="16" height="4" fill="#FFFF00"/></svg>
<svg class="r" style="left:208.7px;top:151.1px;" width="5.6" height="2.8" viewBox="0 0 5.6 2.8"><path d="M0 0h5.6l-2.8 2.8z" fill="#666666"/></svg>
<div class="t" style="left:224.2px;top:144.03px;font-size:13.5px;line-height:13.5px;color:#444;font-weight:normal;">A</div>
<div class="r" style="left:221px;top:156px;width:16px;height:4px;background:#FF0000;"></div>
<svg class="r" style="left:242.7px;top:151.1px;" width="5.6" height="2.8" viewBox="0 0 5.6 2.8"><path d="M0 0h5.6l-2.8 2.8z" fill="#666666"/></svg>
<div class="r" style="left:292px;top:98px;width:14px;height:1.2px;background:#777777;"></div>
<div class="r" style="left:292px;top:101px;width:14px;height:1.2px;background:#777777;"></div>
<div class="r" style="left:292px;top:104.5px;width:14px;height:1.2px;background:#777777;"></div>
<div class="r" style="left:314px;top:102px;width:14px;height:1.2px;background:#777777;"></div>
<div class="r" style="left:314px;top:105.5px;width:14px;height:1.2px;background:#777777;"></div>
<div class="r" style="left:314px;top:108.5px;width:14px;height:1.2px;background:#777777;"></div>
<div class="r" style="left:332px;top:95px;width:22px;height:23px;background:#C6C6C6;"></div>
<div class="r" style="left:336px;top:107px;width:14px;height:1.2px;background:#777777;"></div>
<div class="r" style="left:336px;top:110px;width:14px;height:1.2px;background:#777777;"></div>
<div class="r" style="left:336px;top:113.5px;width:14px;height:1.2px;background:#777777;"></div>
<div class="t" style="left:361.5px;top:95.72px;font-size:11.5px;line-height:11.5px;color:#555;font-weight:normal;">ab</div>
<div class="t" style="left:361.8px;top:102.72px;font-size:11.5px;line-height:11.5px;color:#555;font-weight:normal;">c</div>
<svg class="r" style="left:369px;top:107px;" width="7" height="6" viewBox="0 0 7 6"><path d="M5.5 0.5v3H1.8M3.3 1.8 1.5 3.5l1.8 1.8" fill="none" stroke="#4A86C8" stroke-width="1.1"/></svg>
<div class="r" style="left:292px;top:123.5px;width:14px;height:1.2px;background:#777777;"></div>
<div class="r" style="left:292px;top:127px;width:10px;height:1.2px;background:#777777;"></div>
<div class="r" style="left:292px;top:130.5px;width:14px;height:1.2px;background:#777777;"></div>
<div class="r" style="left:292px;top:134px;width:10px;height:1.2px;background:#777777;"></div>
<div class="r" style="left:314px;top:123.5px;width:14px;height:1.2px;background:#777777;"></div>
<div class="r" style="left:316px;top:127px;width:10px;height:1.2px;background:#777777;"></div>
<div class="r" style="left:314px;top:130.5px;width:14px;height:1.2px;background:#777777;"></div>
<div class="r" style="left:316px;top:134px;width:10px;height:1.2px;background:#777777;"></div>
<div class="r" style="left:336px;top:123.5px;width:14px;height:1.2px;background:#777777;"></div>
<div class="r" style="left:340px;top:127px;width:10px;height:1.2px;background:#777777;"></div>
<div class="r" style="left:336px;top:130.5px;width:14px;height:1.2px;background:#777777;"></div>
<div class="r" style="left:340px;top:134px;width:10px;height:1.2px;background:#777777;"></div>
<svg class="r" style="left:359px;top:120px;" width="17" height="17" viewBox="0 0 17 17"><rect x="1.5" y="1.5" width="14" height="14" fill="#fff" stroke="#666" stroke-width="1"/>
<path d="M1.5 4.5h14M1.5 12.5h14M8.5 1.5v3M8.5 12.5v3" stroke="#666" stroke-width="1"/>
<path d="M3.5 8.5h10M5.3 6.7 3.5 8.5l1.8 1.8M11.7 6.7l1.8 1.8-1.8 1.8" fill="none" stroke="#4A86C8" stroke-width="1.1"/></svg>
<svg class="r" style="left:381.7px;top:128.1px;" width="5.6" height="2.8" viewBox="0 0 5.6 2.8"><path d="M0 0h5.6l-2.8 2.8z" fill="#666666"/></svg>
<svg class="r" style="left:290px;top:144px;" width="18" height="15" viewBox="0 0 18 15"><path d="M1 1.5h16M8 4.5h9M8 7.5h9M8 10.5h9M1 13.5h16" stroke="#666" stroke-width="1"/><path d="M1.8 7.5h5.2M4.5 4.8 1.8 7.5 4.5 10.2" fill="none" stroke="#4A86C8" stroke-width="1.6"/></svg>
<svg class="r" style="left:312px;top:144px;" width="18" height="15" viewBox="0 0 18 15"><path d="M1 1.5h16M8 4.5h9M8 7.5h9M8 10.5h9M1 13.5h16" stroke="#666" stroke-width="1"/><path d="M1 7.5h5.2M3.8 4.8 6.5 7.5 3.8 10.2" fill="none" stroke="#4A86C8" stroke-width="1.6"/></svg>
<div class="r" style="left:336px;top:142px;width:1px;height:21px;background:#C8C8C8;"></div>
<svg class="r" style="left:342px;top:142px;" width="19" height="19" viewBox="0 0 19 19"><text x="0" y="0" transform="translate(6.5 16) rotate(-50)" font-family="Liberation Sans" font-size="10.5" fill="#555">ab</text><path d="M8 16.5 17 7.5M13.8 7.3h3.4v3.4" fill="none" stroke="#555" stroke-width="1.1"/></svg>
<svg class="r" style="left:363.7px;top:151.1px;" width="5.6" height="2.8" viewBox="0 0 5.6 2.8"><path d="M0 0h5.6l-2.8 2.8z" fill="#666666"/></svg>
<div class="r" style="left:408px;top:95px;width:78px;height:23px;background:#FFFFFF;box-sizing:border-box;border:1px solid #ABABAB;"></div>
<div class="t" style="left:411.5px;top:100.55px;font-size:12.3px;line-height:12.3px;color:#262626;font-weight:normal;">Общий</div>
<svg class="r" style="left:475.7px;top:105.1px;" width="5.6" height="2.8" viewBox="0 0 5.6 2.8"><path d="M0 0h5.6l-2.8 2.8z" fill="#666666"/></svg>
<svg class="r" style="left:410px;top:120px;" width="18" height="18" viewBox="0 0 18 18"><rect x="1" y="1.5" width="16" height="8.5" fill="#4A86C8"/><ellipse cx="9" cy="5.75" rx="6" ry="2.6" fill="#fff"/><circle cx="8.3" cy="5.6" r="2" fill="#4A86C8"/>
<g fill="#E9C27D" stroke="#F3F3F3" stroke-width="0.8"><ellipse cx="13.5" cy="9.6" rx="3.8" ry="1.6"/><ellipse cx="13.5" cy="11.9" rx="3.8" ry="1.6"/><ellipse cx="13.5" cy="14.2" rx="3.8" ry="1.6"/>
<ellipse cx="7.5" cy="13.4" rx="3.8" ry="1.6"/><ellipse cx="7.5" cy="15.8" rx="3.8" ry="1.6"/></g></svg>
<svg class="r" style="left:432.7px;top:128.1px;" width="5.6" height="2.8" viewBox="0 0 5.6 2.8"><path d="M0 0h5.6l-2.8 2.8z" fill="#666666"/></svg>
<div class="t" style="left:447px;top:122.67px;font-size:14.5px;line-height:14.5px;color:#444;font-weight:normal;">%</div>
<div class="t" style="left:467.5px;top:124.35px;font-size:9px;line-height:9px;color:#444;font-weight:normal;">000</div>
<svg class="r" style="left:410px;top:143px;" width="18" height="17" viewBox="0 0 18 17"><text x="10" y="7.5" font-family="Liberation Sans" font-size="9.5" fill="#444">0</text><text x="2" y="15.5" font-family="Liberation Sans" font-size="9.5" fill="#444">,00</text><path d="M1.5 6h6M4.3 3.2 1.5 6l2.8 2.8" fill="none" stroke="#4A86C8" stroke-width="1.4"/></svg>
<svg class="r" style="left:432px;top:143px;" width="18" height="17" viewBox="0 0 18 17"><text x="1.5" y="7.5" font-family="Liberation Sans" font-size="9.5" fill="#444">,00</text><text x="8" y="15.5" font-family="Liberation Sans" font-size="9.5" fill="#444">,0</text><path d="M1 12.5h6.5M4.7 9.7 7.5 12.5 4.7 15.3" fill="none" stroke="#4A86C8" stroke-width="1.4"/></svg>
<svg class="r" style="left:504px;top:97px;" width="20" height="18" viewBox="0 0 20 18"><rect x="1.5" y="1.5" width="13" height="12.5" fill="#fff" stroke="#707070" stroke-width="1"/>
<rect x="2" y="2" width="6.5" height="3" fill="#E2543A"/><rect x="2" y="5.6" width="9" height="3" fill="#4A86C8"/><rect x="2" y="9.2" width="3" height="4.3" fill="#E2543A"/>
<path d="M9 2v3.5M12 2v3.5" stroke="#ccc" stroke-width="1"/>
<rect x="7.5" y="8.5" width="9" height="8" fill="#fff" stroke="#707070" stroke-width="1"/><path d="M9.5 11.5h5M9.5 13.5h5M13.5 10 10.5 15" stroke="#333" stroke-width="0.9"/></svg>
<svg class="r" style="left:504px;top:120px;" width="20" height="18" viewBox="0 0 20 18"><rect x="1.5" y="1.5" width="14.5" height="12.5" fill="#fff" stroke="#707070" stroke-width="1"/>
<rect x="5.5" y="5.5" width="8" height="8" fill="#C3D6EC"/>
<path d="M1.5 5.5h14.5M1.5 9.5h14.5M5.5 1.5v12.5M9.5 1.5v12.5M13.5 1.5v12.5" stroke="#A8A8A8" stroke-width="1"/><path d="M16.6 3.8 19 6.2 13.2 12.6 10.8 10.2z" fill="#707070"/><path d="M10.6 10.2l2.6 2.6c-.5 2.6-2.8 3.9-6.2 4 .8-3.2 1.8-6 3.6-6.6z" fill="#4A86C8"/><path d="M11.4 12.4c.5.6.3 1.3-.5 1.7" fill="none" stroke="#fff" stroke-width="0.9"/></svg>
<svg class="r" style="left:504px;top:143px;" width="20" height="18" viewBox="0 0 20 18"><rect x="1.5" y="1.5" width="14.5" height="12.5" fill="#fff" stroke="#707070" stroke-width="1"/>
<rect x="4.5" y="4.5" width="11" height="9" fill="#C3D6EC"/>
<path d="M1.5 4.5h14.5M4.5 1.5v12.5" stroke="#A8A8A8" stroke-width="1"/><path d="M16.6 3.8 19 6.2 13.2 12.6 10.8 10.2z" fill="#707070"/><path d="M10.6 10.2l2.6 2.6c-.5 2.6-2.8 3.9-6.2 4 .8-3.2 1.8-6 3.6-6.6z" fill="#4A86C8"/><path d="M11.4 12.4c.5.6.3 1.3-.5 1.7" fill="none" stroke="#fff" stroke-width="0.9"/></svg>
<div class="t" style="left:524.5px;top:101.00px;font-size:12px;line-height:12px;color:#262626;font-weight:normal;">Условное форматирование</div>
<svg class="r" style="left:679.0px;top:105.75px;" width="5" height="2.5" viewBox="0 0 5 2.5"><path d="M0 0h5l-2.5 2.5z" fill="#666666"/></svg>
<div class="t" style="left:524.5px;top:124.00px;font-size:12px;line-height:12px;color:#262626;font-weight:normal;">Форматировать как таблицу</div>
<svg class="r" style="left:683.0px;top:128.75px;" width="5" height="2.5" viewBox="0 0 5 2.5"><path d="M0 0h5l-2.5 2.5z" fill="#666666"/></svg>
<div class="t" style="left:524.5px;top:147.34px;font-size:11.6px;line-height:11.6px;color:#262626;font-weight:normal;">Стили ячеек</div>
<svg class="r" style="left:595.0px;top:151.75px;" width="5" height="2.5" viewBox="0 0 5 2.5"><path d="M0 0h5l-2.5 2.5z" fill="#666666"/></svg>
<div class="r" style="left:715px;top:96px;width:32px;height:31px;background:#FDFDFD;box-sizing:border-box;border:1px solid #ABABAB;"></div>
<svg class="r" style="left:721px;top:101px;" width="19" height="19" viewBox="0 0 19 19"><path d="M2.5 2v3M15.5 2v3M3.5 3.5h11M5.2 2 3.5 3.5 5.2 5M12.8 2l1.7 1.5L12.8 5" fill="none" stroke="#4A86C8" stroke-width="1"/>
<rect x="2.5" y="6.5" width="14" height="11" rx="0.5" fill="#fff" stroke="#707070" stroke-width="1"/>
<path d="M2.5 9.5h14M2.5 12.5h14M6.5 6.5v11M10.5 6.5v11M13.5 6.5v11" stroke="#AAA" stroke-width="1"/><rect x="5" y="8.5" width="5" height="4.5" fill="#4A86C8"/>
<path d="M3 17.5h12" stroke="#707070" stroke-width="1"/></svg>
<div class="t" style="left:531px;width:400px;text-align:center;top:133.80px;font-size:12px;line-height:12px;color:#262626;font-weight:normal;">Ячейки</div>
<svg class="r" style="left:729.0px;top:153.75px;" width="5" height="2.5" viewBox="0 0 5 2.5"><path d="M0 0h5l-2.5 2.5z" fill="#666666"/></svg>
<div class="r" style="left:797px;top:96px;width:32px;height:31px;background:#FDFDFD;box-sizing:border-box;border:1px solid #ABABAB;"></div>
<svg class="r" style="left:805px;top:102px;" width="16" height="16" viewBox="0 0 16 16"><circle cx="9.5" cy="7" r="3.9" fill="none" stroke="#4A86C8" stroke-width="1.8"/><path d="M6.7 9.8 3 13.5" stroke="#4A86C8" stroke-width="2.6" stroke-linecap="round"/></svg>
<div class="t" style="left:612.5px;width:400px;text-align:center;top:134.06px;font-size:11.7px;line-height:11.7px;color:#262626;font-weight:normal;">Редактирование</div>
<svg class="r" style="left:810.0px;top:153.75px;" width="5" height="2.5" viewBox="0 0 5 2.5"><path d="M0 0h5l-2.5 2.5z" fill="#666666"/></svg>
<div class="r" style="left:28px;top:502.5px;width:870.5px;height:155px;box-sizing:border-box;border:4.5px solid #FF0000;border-radius:11px;filter:drop-shadow(2px 3px 3px rgba(0,0,0,0.5));"></div>
</body></html>
